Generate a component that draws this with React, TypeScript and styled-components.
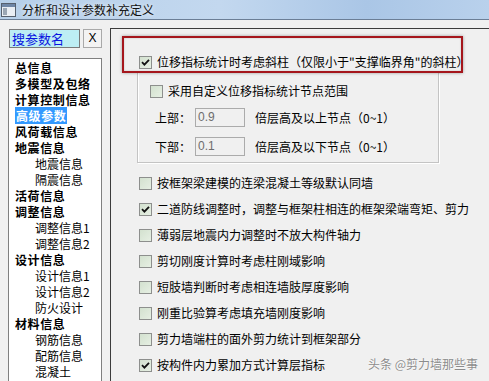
import React from 'react';
import styled, { createGlobalStyle } from 'styled-components';

const GlobalStyle = createGlobalStyle`
  html, body {
    margin: 0;
    padding: 0;
    background: #f0f0f0;
  }
  body {
    font-family: 'Noto Sans CJK SC', 'Noto Sans', sans-serif;
    font-size: 12px;
    color: #000;
  }
`;

const Window = styled.div`
  position: relative;
  width: 489px;
  height: 381px;
  overflow: hidden;
  display: flex;
  flex-direction: column;
  background: #f0f0f0;
`;

const TitleBar = styled.div`
  height: 19px;
  flex-shrink: 0;
  display: flex;
  align-items: center;
  gap: 6px;
  padding-left: 1px;
  border-bottom: 1px solid #6b7e96;
  background: linear-gradient(90deg, #b6cfe9 0%, #c3d8ef 45%, #aac6e6 75%, #b9d1ec 100%);
`;

const TitleText = styled.span`
  font-size: 12px;
  line-height: 19px;
  color: #111;
  text-shadow: 0 0 4px rgba(255, 255, 255, 0.9);
`;

const Body = styled.div`
  flex: 1;
  display: flex;
  min-height: 0;
`;

const Sidebar = styled.div`
  width: 94px;
  margin-left: 8px;
  padding-top: 9px;
  display: flex;
  flex-direction: column;
  flex-shrink: 0;
`;

const SearchRow = styled.div`
  display: flex;
  gap: 3px;
  height: 19px;
`;

const SearchBox = styled.div`
  box-sizing: border-box;
  width: 71px;
  margin-left: 1px;
  height: 19px;
  border: 1px solid #7a7a7a;
  background: #bdeef4;
  color: #0a14e0;
  font-size: 13px;
  line-height: 17px;
  padding-left: 2px;
  white-space: nowrap;
`;

const XButton = styled.div`
  box-sizing: border-box;
  width: 19px;
  height: 19px;
  border: 1px solid #a9a9a9;
  background: #f3f3f3;
  font-family: 'Liberation Sans', sans-serif;
  font-size: 12px;
  line-height: 17px;
  text-align: center;
`;

const ParamList = styled.div`
  flex: 1;
  margin-top: 10px;
  background: #fff;
  border: 1px solid #7f7f7f;
  border-bottom: none;
  padding: 1px 0 0 6px;
`;

const ListItem = styled.div<{ $sub?: boolean }>`
  height: 16px;
  line-height: 16px;
  white-space: nowrap;
  font-size: 12px;
  padding-left: ${(p) => (p.$sub ? '20px' : '0')};
  font-weight: ${(p) => (p.$sub ? 400 : 700)};
  letter-spacing: ${(p) => (p.$sub ? '0' : '0.6px')};
`;

const Selected = styled.span`
  background: #3399ff;
  color: #fff;
  padding: 0 1px;
`;

const Main = styled.div`
  flex: 1;
  margin-left: 8px;
  margin-top: 8px;
  border-top: 1px solid #3c3c3c;
  border-left: 1px solid #3c3c3c;
  padding: 7px 0 0 11px;
  display: flex;
  flex-direction: column;
  min-width: 0;
`;

const RedFrame = styled.div`
  box-sizing: border-box;
  width: 341px;
  height: 37px;
  border: 2px solid #a5161c;
  box-shadow: 0 0 3px rgba(0, 0, 0, 0.35), inset 0 0 2px rgba(0, 0, 0, 0.2);
  padding: 16px 0 0 15px;
  position: relative;
  z-index: 1;
`;

const Group = styled.div`
  box-sizing: border-box;
  width: 302px;
  margin-left: 15px;
  border: 1px solid #c4c4c4;
  border-top: none;
  box-shadow: inset 1px 0 0 #fff, 1px 1px 0 #fff;
  padding: 10px 0 6px 12px;
  display: flex;
  flex-direction: column;
`;

const CheckRow = styled.label`
  display: flex;
  align-items: center;
  gap: 5px;
  height: 16px;
  line-height: 16px;
  white-space: nowrap;
`;

const Box = styled.span`
  box-sizing: border-box;
  width: 13px;
  height: 13px;
  flex-shrink: 0;
  border: 1px solid #8d8f8d;
  background: linear-gradient(135deg, #d3e1cf 0%, #e6efe3 100%);
  display: flex;
  align-items: center;
  justify-content: center;
`;

const ValueRow = styled.div<{ $gap: number }>`
  display: flex;
  align-items: center;
  height: 19px;
  margin-top: ${(p) => p.$gap}px;
  padding-left: 5px;
  white-space: nowrap;
`;

const ValueLabel = styled.span`
  width: 40px;
`;

const ValueInput = styled.div`
  box-sizing: border-box;
  width: 50px;
  height: 19px;
  margin-right: 10px;
  border: 1px solid #ababab;
  background: #f0f0f0;
  color: #6d6d6d;
  font-family: 'Liberation Sans', sans-serif;
  font-size: 12px;
  line-height: 17px;
  padding-left: 2px;
`;

const Options = styled.div`
  display: flex;
  flex-direction: column;
  gap: 10px;
  margin-top: 12px;
  margin-left: 17px;
`;

const Watermark = styled.div`
  position: absolute;
  right: 11px;
  bottom: 9px;
  font-size: 12px;
  color: #8c8c8c;
  text-shadow: 0 0 2px #fff, 0 0 1px #fff;
  white-space: nowrap;
`;

const CheckBox = ({ checked }: { checked?: boolean }) => (
  <Box>
    {checked && (
      <svg width="9" height="9" viewBox="0 0 9 9">
        <path d="M1 4.2 L3.4 6.6 L8 1.8" fill="none" stroke="#111" strokeWidth="1.8" />
      </svg>
    )}
  </Box>
);

const WindowIcon = () => (
  <svg width="15" height="14" viewBox="0 0 15 14">
    <rect x="0.5" y="0.5" width="14" height="13" fill="#e9eef4" stroke="#56606e" />
    <rect x="1" y="1" width="13" height="3" fill="#6f86a6" />
    <rect x="2" y="5" width="4" height="7" fill="#9aa6b4" />
  </svg>
);

const params: { name: string; sub?: boolean; selected?: boolean }[] = [
  { name: '总信息' },
  { name: '多模型及包络' },
  { name: '计算控制信息' },
  { name: '高级参数', selected: true },
  { name: '风荷载信息' },
  { name: '地震信息' },
  { name: '地震信息', sub: true },
  { name: '隔震信息', sub: true },
  { name: '活荷信息' },
  { name: '调整信息' },
  { name: '调整信息1', sub: true },
  { name: '调整信息2', sub: true },
  { name: '设计信息' },
  { name: '设计信息1', sub: true },
  { name: '设计信息2', sub: true },
  { name: '防火设计', sub: true },
  { name: '材料信息' },
  { name: '钢筋信息', sub: true },
  { name: '配筋信息', sub: true },
  { name: '混凝土', sub: true },
];

const options = [
  { text: '按框架梁建模的连梁混凝土等级默认同墙' },
  { text: '二道防线调整时，调整与框架柱相连的框架梁端弯矩、剪力', checked: true },
  { text: '薄弱层地震内力调整时不放大构件轴力' },
  { text: '剪切刚度计算时考虑柱刚域影响' },
  { text: '短肢墙判断时考虑相连墙肢厚度影响' },
  { text: '刚重比验算考虑填充墙刚度影响' },
  { text: '剪力墙端柱的面外剪力统计到框架部分' },
  { text: '按构件内力累加方式计算层指标', checked: true },
];

const App = () => {
  return (
    <Window>
      <GlobalStyle />
      <TitleBar>
        <WindowIcon />
        <TitleText>分析和设计参数补充定义</TitleText>
      </TitleBar>
      <Body>
        <Sidebar>
          <SearchRow>
            <SearchBox>搜参数名</SearchBox>
            <XButton>X</XButton>
          </SearchRow>
          <ParamList>
            {params.map((p, i) => (
              <ListItem key={i} $sub={p.sub}>
                {p.selected ? <Selected>{p.name}</Selected> : p.name}
              </ListItem>
            ))}
          </ParamList>
        </Sidebar>
        <Main>
          <RedFrame>
            <CheckRow>
              <CheckBox checked />
              位移指标统计时考虑斜柱（仅限小于"支撑临界角"的斜柱）
            </CheckRow>
          </RedFrame>
          <Group>
            <CheckRow>
              <CheckBox />
              采用自定义位移指标统计节点范围
            </CheckRow>
            <ValueRow $gap={9}>
              <ValueLabel>上部：</ValueLabel>
              <ValueInput>0.9</ValueInput>
              倍层高及以上节点（0~1）
            </ValueRow>
            <ValueRow $gap={10}>
              <ValueLabel>下部：</ValueLabel>
              <ValueInput>0.1</ValueInput>
              倍层高及以下节点（0~1）
            </ValueRow>
          </Group>
          <Options>
            {options.map((o, i) => (
              <CheckRow key={i}>
                <CheckBox checked={o.checked} />
                {o.text}
              </CheckRow>
            ))}
          </Options>
        </Main>
      </Body>
      <Watermark>头条 @剪力墙那些事</Watermark>
    </Window>
  );
};

export default App;
